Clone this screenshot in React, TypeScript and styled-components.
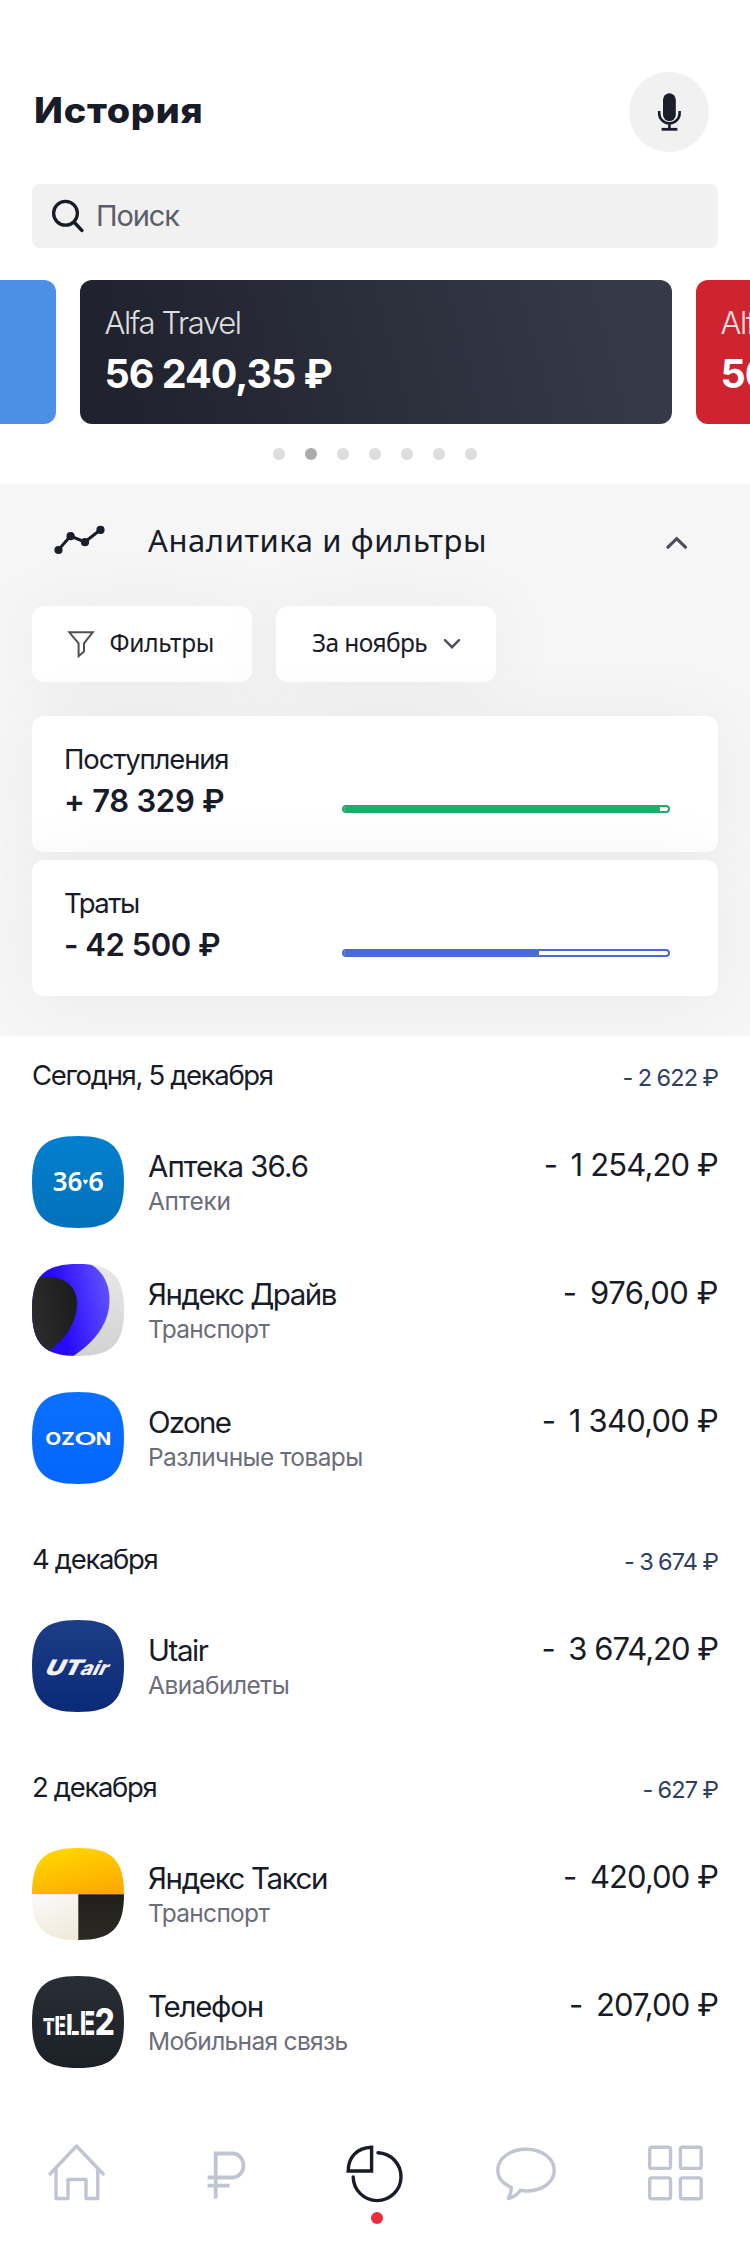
import React from "react";
import styled, { createGlobalStyle } from "styled-components";

const GlobalStyle = createGlobalStyle`
  * { box-sizing: border-box; }
  body {
    margin: 0;
    background: #fff;
    color: #181b28;
    font-family: Inter, "Liberation Sans", sans-serif;
    -webkit-font-smoothing: antialiased;
  }
`;

const Screen = styled.main`
  width: 750px;
  height: 2252px;
  display: flex;
  flex-direction: column;
  overflow: hidden;
  background: #fff;
`;

/* ---------- header ---------- */

const Header = styled.header`
  display: flex;
  align-items: center;
  justify-content: space-between;
  height: 80px;
  margin: 72px 41px 0 34px;
`;

const Title = styled.h1`
  margin: 0;
  padding-bottom: 5px;
  font-size: 35px;
  font-weight: 800;
  line-height: 44px;
  letter-spacing: 0.7px;
  transform: scaleX(1.08);
  transform-origin: left center;
`;

const VoiceButton = styled.button`
  width: 80px;
  height: 80px;
  padding: 0;
  border: 0;
  border-radius: 50%;
  background: #f1f1f1;
  display: flex;
  align-items: center;
  justify-content: center;
`;

const SearchBox = styled.div`
  display: flex;
  align-items: center;
  gap: 12px;
  height: 64px;
  margin: 32px 32px 0;
  padding-left: 18px;
  border-radius: 8px;
  background: #f1f1f1;
`;

const SearchHint = styled.span`
  font-size: 29px;
  line-height: 36px;
  letter-spacing: -1.1px;
  color: #5b5e69;
`;

/* ---------- account carousel ---------- */

const Carousel = styled.section`
  display: flex;
  gap: 24px;
  width: 1824px;
  margin: 32px 0 0 -536px;
`;

const AccountCard = styled.article<{ $fill: string }>`
  flex: 0 0 592px;
  height: 144px;
  padding: 23px 24px 0 24.5px;
  border-radius: 12px;
  background: ${(p) => p.$fill};
  color: #fff;
  white-space: nowrap;
`;

const AccountName = styled.div`
  font-size: 31px;
  font-weight: 300;
  line-height: 40px;
  letter-spacing: -1.4px;
  opacity: 0.85;
`;

const AccountBalance = styled.div`
  margin-top: 6px;
  font-size: 39.5px;
  font-weight: 700;
  line-height: 50px;
  letter-spacing: -1px;
`;

const Dots = styled.div`
  display: flex;
  justify-content: center;
  gap: 20px;
  margin: 24px 0;
`;

const Dot = styled.span<{ $active: boolean }>`
  width: 12px;
  height: 12px;
  border-radius: 50%;
  background: ${(p) => (p.$active ? "#a9a9ae" : "#dddde0")};
`;

/* ---------- analytics ---------- */

const Analytics = styled.section`
  height: 552px;
  padding: 0 32px;
  background: #f6f6f6;
  overflow: hidden;
`;

const AnalyticsHeader = styled.div`
  display: flex;
  align-items: center;
  height: 112px;
  padding: 0 30px 0 22px;
`;

const AnalyticsTitle = styled.h2`
  flex: 1;
  margin: 0 0 0 42px;
  font-family: "Noto Sans", Inter, sans-serif;
  font-size: 31px;
  font-weight: 400;
  line-height: 40px;
  letter-spacing: 0.6px;
`;

const FilterBar = styled.div`
  display: flex;
  gap: 24px;
  margin-top: 10px;
`;

const FilterButton = styled.button<{ $inset: string; $gap: string; $tracking: string }>`
  display: flex;
  align-items: center;
  gap: ${(p) => p.$gap};
  width: 220px;
  height: 76px;
  padding: 0 0 0 ${(p) => p.$inset};
  border: 0;
  border-radius: 12px;
  background: #fff;
  box-shadow: 0 4px 80px rgba(0, 0, 0, 0.05);
  color: inherit;
  font-family: "Noto Sans", Inter, sans-serif;
  font-size: 24.5px;
  line-height: 32px;
  letter-spacing: ${(p) => p.$tracking};
`;

const ButtonLabel = styled.span`
  padding-bottom: 2px;
`;

const Totals = styled.div`
  display: flex;
  flex-direction: column;
  gap: 8px;
  margin-top: 34px;
`;

const TotalCard = styled.article`
  display: flex;
  align-items: center;
  justify-content: space-between;
  height: 136px;
  padding: 0 48px 0 32px;
  border-radius: 12px;
  background: #fff;
  box-shadow: 0 4px 80px rgba(0, 0, 0, 0.05);
`;

const TotalText = styled.div`
  padding-bottom: 5px;
`;

const TotalLabel = styled.div<{ $tracking: number }>`
  font-size: 27.5px;
  line-height: 34px;
  letter-spacing: ${(p) => p.$tracking}px;
`;

const TotalValue = styled.div<{ $tracking: number }>`
  margin-top: 5.5px;
  font-size: 31px;
  font-weight: 600;
  line-height: 40px;
  letter-spacing: ${(p) => p.$tracking}px;
`;

const Meter = styled.div<{ $tone: string }>`
  width: 328px;
  height: 8px;
  margin-top: 49px;
  border: 1.5px solid ${(p) => p.$tone};
  border-radius: 4px;
  overflow: hidden;
  border-width: 2px;
`;

const MeterFill = styled.div<{ $tone: string }>`
  height: 100%;
  background: ${(p) => p.$tone};
`;

/* ---------- operations ---------- */

const Operations = styled.section`
  display: flex;
  flex-direction: column;
  gap: 36px;
  height: 1032px;
  padding: 0 32px;
`;

const DayHeader = styled.div`
  display: flex;
  align-items: center;
  justify-content: space-between;
  height: 77px;
  margin-bottom: 23px;
`;

const DayTitle = styled.h3`
  margin: 0;
  font-size: 27.5px;
  font-weight: 400;
  line-height: 34px;
  letter-spacing: -1.35px;
`;

const DaySum = styled.span`
  padding-top: 6px;
  font-size: 23.5px;
  line-height: 30px;
  letter-spacing: -0.9px;
  word-spacing: -0.4px;
  color: #2f3f63;
`;

const OperationList = styled.div`
  display: flex;
  flex-direction: column;
  gap: 36px;
`;

const Operation = styled.article`
  display: flex;
  align-items: flex-start;
  height: 92px;
`;

const OperationText = styled.div`
  flex: 1;
  margin: 12px 0 0 24px;
`;

const Merchant = styled.div<{ $tracking: number }>`
  font-size: 29.5px;
  line-height: 36px;
  letter-spacing: ${(p) => p.$tracking}px;
`;

const Category = styled.div<{ $tracking: number }>`
  margin-top: 2px;
  font-size: 24.5px;
  line-height: 30px;
  letter-spacing: ${(p) => p.$tracking}px;
  color: #6c6d7a;
`;

const Amount = styled.div<{ $tracking: number }>`
  display: flex;
  gap: 13.5px;
  margin-top: 11px;
  font-size: 31px;
  line-height: 36px;
  letter-spacing: ${(p) => p.$tracking}px;
  white-space: nowrap;
`;

/* ---------- tab bar ---------- */

const TabBar = styled.nav`
  display: grid;
  grid-template-columns: repeat(5, 1fr);
  height: 184px;
  padding-top: 74px;
`;

const Tab = styled.a<{ $active?: boolean }>`
  display: flex;
  flex-direction: column;
  align-items: center;
  gap: 6px;
  color: ${(p) => (p.$active ? "#181b28" : "#c1c5d2")};
`;

const ActiveMark = styled.span`
  width: 12px;
  height: 12px;
  margin-left: 3px;
  border-radius: 50%;
  background: #ee2c3c;
`;

/* ---------- drawings ---------- */

const MicIcon = () => (
  <svg width="26" height="40" viewBox="0 0 26 40">
    <rect x="7" y="1.3" width="12.8" height="27.8" rx="6.4" fill="#1a1d2a" />
    <path d="M3.2 19v2.2a10.2 10.2 0 0 0 20.4 0V19M13.4 31.5v5" fill="none" stroke="#1a1d2a" strokeWidth="2.6" />
    <path d="M5.6 37.3h15.8" stroke="#1a1d2a" strokeWidth="2.8" />
  </svg>
);

const SearchIcon = () => (
  <svg width="34" height="34" viewBox="0 0 34 34" fill="none" stroke="#181b28" strokeWidth="3.3" strokeLinecap="round">
    <circle cx="15.5" cy="14.3" r="11.9" />
    <path d="M24.2 23.2l7.600 8.200" strokeWidth="3.5" />
  </svg>
);

const TrendIcon = () => (
  <svg width="52" height="30" viewBox="0 0 52 30" fill="#1a1d2a">
    <path d="M4.3 25L16.5 11l14.300 6L46.500 4.800" fill="none" stroke="#1a1d2a" strokeWidth="3" />
    <circle cx="4.5" cy="25" r="4.1" />
    <circle cx="16.6" cy="11.2" r="4.1" />
    <circle cx="31" cy="17.2" r="4.1" />
    <circle cx="46.5" cy="4.9" r="4.1" />
  </svg>
);

const ChevronUp = () => (
  <svg width="23" height="18" viewBox="0 0 23 18" fill="none" stroke="#4d4f5b" strokeWidth="3.2" strokeLinecap="round">
    <path d="M3 17L11.7 8.500l8.700 8.500" transform="translate(0 -.8)" />
  </svg>
);

const ChevronDown = () => (
  <svg width="18" height="12" viewBox="0 0 18 12" fill="none" stroke="#4d4f5b" strokeWidth="2.4" strokeLinecap="round">
    <path d="M2 2.200l7 7 7-7" />
  </svg>
);

const FunnelIcon = () => (
  <svg width="28" height="28" viewBox="0 0 28 28" fill="none" stroke="#4d4f5b" strokeWidth="2">
    <path d="M2.3 2.300h23.400L17 13.400v8.200l-5.400 4.600V13.400z" />
  </svg>
);

const SQUIRCLE = "M0 46C0 12 12 0 46 0S92 12 92 46 80 92 46 92 0 80 0 46Z";

const Badge = ({ id, from, to, children }: { id: string; from: string; to: string; children?: React.ReactNode }) => (
  <svg width="92" height="92" viewBox="0 0 92 92">
    <defs>
      <clipPath id={`${id}-clip`}>
        <path d={SQUIRCLE} />
      </clipPath>
      <linearGradient id={`${id}-bg`} x1="0" y1="0" x2="0" y2="1">
        <stop offset="0" stopColor={from} />
        <stop offset="1" stopColor={to} />
      </linearGradient>
    </defs>
    <path d={SQUIRCLE} fill={`url(#${id}-bg)`} />
    <g clipPath={`url(#${id}-clip)`}>{children}</g>
  </svg>
);

const fit = { lengthAdjust: "spacingAndGlyphs" as const };

const AptekaLogo = () => (
  <Badge id="apteka" from="#0380ce" to="#0271bb">
    <g fill="#fff" fontFamily="Noto Sans, sans-serif" fontWeight="600" fontSize="26.8">
      <text x="20.8" y="55.3" textLength="29.6" {...fit}>36</text>
      <text x="56.2" y="55.3" textLength="15.5" {...fit}>6</text>
    </g>
    <path d="M51.2 44.500c.3-1.200 1.800-1.300 2.300-.3.5-1 2-.9 2.300.3.2 1.200-1.300 2.600-2.300 4-1-1.400-2.500-2.800-2.300-4z" fill="#fff" />
  </Badge>
);

const DriveLogo = () => (
  <Badge id="drive" from="#e8e8e8" to="#d2d2d2">
    <defs>
      <linearGradient id="drive-blue" x1="0" y1=".6" x2="1" y2=".35">
        <stop offset=".35" stopColor="#2708fb" />
        <stop offset="1" stopColor="#5f50ff" />
      </linearGradient>
      <linearGradient id="drive-dark" x1="0" y1=".6" x2="1" y2=".3">
        <stop offset="0" stopColor="#2c2c2c" />
        <stop offset="1" stopColor="#1c1c1c" />
      </linearGradient>
    </defs>
    <path d="M0 0H58C71 7 77.5 20 77.5 36C77.5 60 62 78 41.5 92H0Z" fill="url(#drive-blue)" />
    <path d="M0 13.5C8 13 14 12.7 20 13.2C36 14.5 45 25 45 39C45 59 33 76 16.7 87L0 92Z" fill="url(#drive-dark)" />
  </Badge>
);

const OzonLogo = () => (
  <Badge id="ozon" from="#0b70ff" to="#0266fb">
    <g fill="#fff" fontFamily="Inter, sans-serif" fontWeight="700" fontSize="17.5">
      <text x="13.2" y="52.600" textLength="16" {...fit}>O</text>
      <text x="29.2" y="52.600" textLength="13.500" {...fit}>Z</text>
      <text x="42.200" y="52.600" textLength="22.500" fontWeight="600" {...fit}>O</text>
      <text x="63.800" y="52.600" textLength="15.500" {...fit}>N</text>
    </g>
  </Badge>
);

const UtairLogo = () => (
  <Badge id="utair" from="#1e3d87" to="#0a2a78">
    <g fill="#f1f1f2" fontFamily="Inter, sans-serif" fontWeight="900" transform="translate(0 55) skewX(-26)">
      <text x="11.500" y="0" fontSize="21.500" textLength="36" {...fit}>UT</text>
      <text x="46.800" y="0" fontSize="19.500" fontWeight="800" textLength="27" {...fit}>air</text>
    </g>
  </Badge>
);

const TaxiLogo = () => (
  <Badge id="taxi" from="#f9f8f6" to="#f1ebdc">
    <defs>
      <linearGradient id="taxi-top" x1=".2" y1="0" x2=".7" y2="1">
        <stop offset="0" stopColor="#ffd900" />
        <stop offset="1" stopColor="#fdaa00" />
      </linearGradient>
      <linearGradient id="taxi-light" x1=".3" y1="0" x2=".7" y2="1">
        <stop offset="0" stopColor="#f9f9f9" />
        <stop offset="1" stopColor="#f0ead9" />
      </linearGradient>
      <linearGradient id="taxi-dark" x1="0" y1="0" x2="0" y2="1">
        <stop offset="0" stopColor="#201f1d" />
        <stop offset="1" stopColor="#2c2a24" />
      </linearGradient>
    </defs>
    <rect width="92" height="46.3" fill="url(#taxi-top)" />
    <rect y="46.3" width="46.3" height="46" fill="url(#taxi-light)" />
    <rect x="46.3" y="46.3" width="46" height="46" fill="url(#taxi-dark)" />
  </Badge>
);

const TeleLogo = () => (
  <Badge id="tele" from="#292d35" to="#1c2127">
    <g fill="#fff" fontFamily="Inter, sans-serif" fontWeight="800">
      <text x="10.8" y="58.600" fontSize="23.500" textLength="12" {...fit}>T</text>
      <text x="22.500" y="58.600" fontSize="26" textLength="11.500" {...fit}>E</text>
      <text x="34" y="58.600" fontSize="28.500" textLength="13.500" {...fit}>L</text>
      <text x="47.800" y="58.600" fontSize="32" textLength="15.500" {...fit}>E</text>
      <text x="62.800" y="58.600" fontSize="36.500" textLength="20" {...fit}>2</text>
    </g>
    <path d="M14 45.200h6M27.600 39v20M53.400 34v25M39.500 54v5" stroke="#22262e" strokeWidth=".7" />
  </Badge>
);

const tabSvg = {
  width: 64,
  height: 64,
  viewBox: "0 0 64 64",
  fill: "none",
  stroke: "currentColor",
  strokeWidth: 3.4,
  strokeLinecap: "round" as const,
  strokeLinejoin: "round" as const,
};

const HomeIcon = () => (
  <svg {...tabSvg}>
    <path d="M7 32L33.500 4L60.200 32M13 27V56.500H25V37.500H43V56.500H54.800V27" />
  </svg>
);

const RubleIcon = () => (
  <svg {...tabSvg} strokeLinecap="butt" strokeWidth={3.8}>
    <path d="M22.700 56.500V11.500H39.500a11 12 0 0 1 0 24H14.600M14.600 43.700H36.600" strokeLinejoin="miter" />
  </svg>
);

const PieIcon = () => (
  <svg {...tabSvg}>
    <path d="M28.600 5.200V29H5.200C5.200 15 14 5.800 28.600 5.200Z" strokeLinejoin="miter" />
    <path d="M35 10.800A23.900 23.900 0 1 1 10.200 35" />
  </svg>
);

const ChatIcon = () => (
  <svg {...tabSvg}>
    <path d="M18.300 45.500C9.500 41.500 4.800 35.500 4.800 28.500C4.800 16.500 17 7.300 33 7.300S61.200 16.500 61.200 28.500S49 49 33.500 49Q30.500 49 27.500 48.200Q22.500 55 15.300 56.500Q18.500 51 18.300 45.500Z" />
  </svg>
);

const GridIcon = () => (
  <svg {...tabSvg}>
    <rect x="6.700" y="5.200" width="20.800" height="21.200" rx="2" />
    <rect x="37.400" y="5.200" width="20.800" height="21.200" rx="2" />
    <rect x="6.700" y="35.900" width="20.800" height="20.800" rx="2" />
    <rect x="37.400" y="35.900" width="20.800" height="20.800" rx="2" />
  </svg>
);

/* ---------- data ---------- */

const accounts = [
  { name: "", balance: "", fill: "#4c90e6" },
  { name: "Alfa Travel", balance: "56 240,35 ₽", fill: "linear-gradient(75deg, #20222e 8%, #363a48 92%)" },
  { name: "Alfa Travel", balance: "56 240,35 ₽", fill: "#cf2430" },
];

const totals = [
  { label: "Поступления", value: "+ 78 329 ₽", labelTracking: -1.15, valueTracking: -0.27, tone: "#1fae69", share: 97.5 },
  { label: "Траты", value: "- 42 500 ₽", labelTracking: -1.5, valueTracking: -0.47, tone: "#476cd6", share: 60.3 },
];

type Entry = {
  logo: React.ReactNode;
  name: string;
  kind: string;
  amount: string;
  nameTracking: number;
  kindTracking: number;
  amountTracking: number;
};

const days: { title: string; sum: string; entries: Entry[] }[] = [
  {
    title: "Сегодня, 5 декабря",
    sum: "- 2 622 ₽",
    entries: [
      { logo: <AptekaLogo />, name: "Аптека 36.6", kind: "Аптеки", amount: "1 254,20 ₽", nameTracking: -0.95, kindTracking: -0.3, amountTracking: -0.85 },
      { logo: <DriveLogo />, name: "Яндекс Драйв", kind: "Транспорт", amount: "976,00 ₽", nameTracking: -1.5, kindTracking: -0.7, amountTracking: -0.45 },
      { logo: <OzonLogo />, name: "Ozone", kind: "Различные товары", amount: "1 340,00 ₽", nameTracking: -1.7, kindTracking: -0.6, amountTracking: -0.78 },
    ],
  },
  {
    title: "4 декабря",
    sum: "- 3 674 ₽",
    entries: [
      { logo: <UtairLogo />, name: "Utair", kind: "Авиабилеты", amount: "3 674,20 ₽", nameTracking: -1.4, kindTracking: -0.5, amountTracking: -1 },
    ],
  },
  {
    title: "2 декабря",
    sum: "- 627 ₽",
    entries: [
      { logo: <TaxiLogo />, name: "Яндекс Такси", kind: "Транспорт", amount: "420,00 ₽", nameTracking: -1.38, kindTracking: -0.7, amountTracking: -0.92 },
      { logo: <TeleLogo />, name: "Телефон", kind: "Мобильная связь", amount: "207,00 ₽", nameTracking: -1.25, kindTracking: -0.67, amountTracking: -0.9 },
    ],
  },
];

export default function App() {
  return (
    <>
      <GlobalStyle />
      <Screen>
        <Header>
          <Title>История</Title>
          <VoiceButton aria-label="Голосовой поиск">
            <MicIcon />
          </VoiceButton>
        </Header>

        <SearchBox>
          <SearchIcon />
          <SearchHint>Поиск</SearchHint>
        </SearchBox>

        <Carousel>
          {accounts.map((account, i) => (
            <AccountCard key={i} $fill={account.fill}>
              <AccountName>{account.name}</AccountName>
              <AccountBalance>{account.balance}</AccountBalance>
            </AccountCard>
          ))}
        </Carousel>

        <Dots>
          {[0, 1, 2, 3, 4, 5, 6].map((i) => (
            <Dot key={i} $active={i === 1} />
          ))}
        </Dots>

        <Analytics>
          <AnalyticsHeader>
            <TrendIcon />
            <AnalyticsTitle>Аналитика и фильтры</AnalyticsTitle>
            <ChevronUp />
          </AnalyticsHeader>
          <FilterBar>
            <FilterButton $inset="35px" $gap="14.5px" $tracking="-0.25px">
              <FunnelIcon />
              <ButtonLabel>Фильтры</ButtonLabel>
            </FilterButton>
            <FilterButton $inset="36px" $gap="16px" $tracking="-0.6px">
              <ButtonLabel>За ноябрь</ButtonLabel>
              <ChevronDown />
            </FilterButton>
          </FilterBar>
          <Totals>
            {totals.map((total) => (
              <TotalCard key={total.label}>
                <TotalText>
                  <TotalLabel $tracking={total.labelTracking}>{total.label}</TotalLabel>
                  <TotalValue $tracking={total.valueTracking}>{total.value}</TotalValue>
                </TotalText>
                <Meter $tone={total.tone}>
                  <MeterFill $tone={total.tone} style={{ width: `${total.share}%` }} />
                </Meter>
              </TotalCard>
            ))}
          </Totals>
        </Analytics>

        <Operations>
          {days.map((day) => (
            <div key={day.title}>
              <DayHeader>
                <DayTitle>{day.title}</DayTitle>
                <DaySum>{day.sum}</DaySum>
              </DayHeader>
              <OperationList>
                {day.entries.map((entry) => (
                  <Operation key={entry.name}>
                    {entry.logo}
                    <OperationText>
                      <Merchant $tracking={entry.nameTracking}>{entry.name}</Merchant>
                      <Category $tracking={entry.kindTracking}>{entry.kind}</Category>
                    </OperationText>
                    <Amount $tracking={entry.amountTracking}>
                      <span>-</span>
                      <span>{entry.amount}</span>
                    </Amount>
                  </Operation>
                ))}
              </OperationList>
            </div>
          ))}
        </Operations>

        <TabBar>
          <Tab><HomeIcon /></Tab>
          <Tab><RubleIcon /></Tab>
          <Tab $active><PieIcon /><ActiveMark /></Tab>
          <Tab><ChatIcon /></Tab>
          <Tab><GridIcon /></Tab>
        </TabBar>
      </Screen>
    </>
  );
}
